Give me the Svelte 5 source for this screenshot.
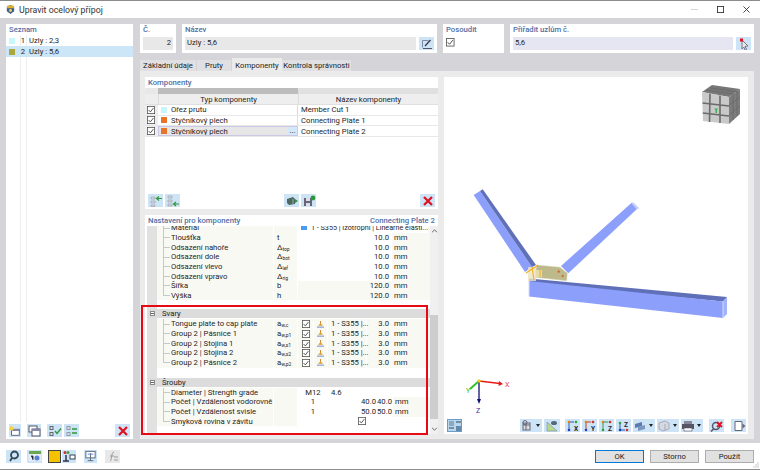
<script lang="ts">
	const plate = [
		{ n: 'Materiál', s: '', mat: true },
		{ n: 'Tloušťka', s: 't', v: '10.0', edit: true },
		{ n: 'Odsazení nahoře', s: 'Δ', sub: 'top', v: '10.0', edit: true },
		{ n: 'Odsazení dole', s: 'Δ', sub: 'bot', v: '10.0', edit: true },
		{ n: 'Odsazení vlevo', s: 'Δ', sub: 'lef', v: '10.0', edit: true },
		{ n: 'Odsazení vpravo', s: 'Δ', sub: 'rig', v: '10.0', edit: true },
		{ n: 'Šířka', s: 'b', v: '120.0' },
		{ n: 'Výška', s: 'h', v: '120.0' }
	];
	const welds = [
		{ n: 'Tongue plate to cap plate', sub: 'w,c' },
		{ n: 'Group 2 | Pásnice 1', sub: 'w,p1' },
		{ n: 'Group 2 | Stojina 1', sub: 'w,s1' },
		{ n: 'Group 2 | Stojina 2', sub: 'w,s2' },
		{ n: 'Group 2 | Pásnice 2', sub: 'w,p2' }
	];
	const components = [
		{ type: 'Ořez prutu', color: '#c8f4fb', name: 'Member Cut 1' },
		{ type: 'Styčníkový plech', color: '#e8742c', name: 'Connecting Plate 1' },
		{ type: 'Styčníkový plech', color: '#e8742c', name: 'Connecting Plate 2', active: true }
	];
	const tabs = ['Základní údaje', 'Pruty', 'Komponenty', 'Kontrola správnosti'];
	const axisText = (l) => `<text x="8" y="11" font-size="6.5" font-weight="700" fill="#223">${l}</text>`;
</script>

{#snippet check()}
	<svg class="check" viewBox="0 0 10 10">
		<rect x="0.5" y="0.5" width="9" height="9" fill="#fff" stroke="#555" />
		<path d="M2 5l2.2 2.4L8 2.6" fill="none" stroke="#444" stroke-width="1.1" />
	</svg>
{/snippet}

{#snippet weldIcon()}
	<svg class="weld" viewBox="0 0 8 8">
		<path d="M4 0v5" stroke="#c77a1c" />
		<path d="M1 5.5L4 2.5L7 5.5z" fill="#e0a030" />
		<path d="M0 7h8" stroke="#5b7fc7" />
	</svg>
{/snippet}

{#snippet tool(width, paths, extra = '')}
	<span class="tool {extra}" style="width:{width}px">
		<svg viewBox="0 0 14 12" width="14" height="12">{@html paths}</svg>
	</span>
{/snippet}

<div class="window">
	<header class="titlebar">
		<svg class="appicon" viewBox="0 0 12 12">
			<path d="M6 1l4 2v5l-4 3-4-3V3z" fill="#3d5f8f" />
			<path d="M3 1.5h6l1 3H2z" fill="#e0b030" />
			<circle cx="6" cy="7" r="1.6" fill="#f2d060" />
		</svg>
		<span class="title">Upravit ocelový přípoj</span>
		<span class="winbtns">
			<svg viewBox="0 0 8 8" class="min"><path d="M0 4h8" stroke="#d0d0d0" /></svg>
			<svg viewBox="0 0 8 8"><rect x="0.5" y="0.5" width="7" height="7" fill="none" stroke="#333" /></svg>
			<svg viewBox="0 0 8 8"><path d="M0.5 0.5l7 7M7.5 0.5l-7 7" stroke="#333" /></svg>
		</span>
	</header>

	<div class="body">
		<aside class="list">
			<div class="caption">Seznam</div>
			<div class="listrows">
				<div class="listrow"><i style="background:#c8f8fb"></i><b>1</b><span>Uzly : 2,3</span></div>
				<div class="listrow selected"><i style="background:#a8a83c"></i><b>2</b><span>Uzly : 5,6</span></div>
			</div>
			<div class="bar">
				{@render tool(12, '<rect x="3" y="4" width="9" height="7" fill="#fff" stroke="#556"/><path d="M3 4h9v2H3z" fill="#88a"/><circle cx="3" cy="3" r="2.4" fill="#f5d340"/>')}
				<span class="s6"></span>
				{@render tool(14, '<rect x="2" y="1" width="8" height="6" fill="#fff" stroke="#556"/><rect x="5" y="4" width="8" height="7" fill="#fff" stroke="#556"/><path d="M5 4h8v2H5z" fill="#88a"/>')}
				<span class="s6"></span>
				{@render tool(15, '<rect x="2" y="1.5" width="3" height="3" fill="none" stroke="#666"/><rect x="2" y="7.5" width="3" height="3" fill="none" stroke="#666"/><path d="M7 6l2 2.5 4-5" fill="none" stroke="#2a9a3a" stroke-width="1.4"/>')}
				<span class="s2"></span>
				{@render tool(15, '<rect x="2" y="1.5" width="3" height="3" fill="none" stroke="#999"/><rect x="2" y="7.5" width="3" height="3" fill="none" stroke="#999"/><path d="M7 4h5M12 8H7" stroke="#2a9a3a" stroke-width="1.4"/>')}
				<span class="grow"></span>
				{@render tool(15, '<path d="M3 2l8 8M11 2l-8 8" stroke="#e01020" stroke-width="2.2"/>')}
			</div>
		</aside>

		<main class="main">
			<div class="top">
				<section class="card no">
					<div class="caption">Č.</div>
					<div class="field right">2</div>
				</section>
				<section class="card name">
					<div class="caption">Název</div>
					<div class="fieldrow">
						<div class="field">Uzly : 5,6</div>
						{@render tool(15, '<path d="M2.500 2.500h6M2.500 2.500v7" stroke="#7a8aa0" fill="none"/><path d="M5 8L10.500 2" stroke="#334" stroke-width="1.200"/><path d="M3 10.500h9" stroke="#556"/>')}
					</div>
				</section>
				<section class="card verify">
					<div class="caption">Posoudit</div>
					{@render check()}
				</section>
				<section class="card assign">
					<div class="caption">Přiřadit uzlům č.</div>
					<div class="fieldrow">
						<div class="field lilac">5,6</div>
						{@render tool(15, '<path d="M5 2l6 6-3 .4 1.6 3-1.4.6-1.5-3L5 11z" fill="#e8e8e8" stroke="#778"/><rect x="3" y="0.500" width="3" height="3" fill="#e01020"/>')}
					</div>
				</section>
			</div>

			<nav class="tabs">
				{#each tabs as t, i}
					<span class="tab" class:active={i === 2}>{t}</span>
				{/each}
			</nav>

			<div class="tabpanel">
				<div class="leftcol">
					<section class="comps">
						<div class="caption">Komponenty</div>
						<div class="band"><span></span><span></span><span></span></div>
						<div class="thead"><span></span><span>Typ komponenty</span><span>Název komponenty</span></div>
						{#each components as c}
							<div class="trow">
								<span class="tick">{@render check()}</span>
								<span class="ttype" class:active={c.active}>
									<i style="background:{c.color}"></i>{c.type}
									{#if c.active}<em>...</em>{/if}
								</span>
								<span class="tname">{c.name}</span>
							</div>
						{/each}
						<div class="grow"></div>
						<div class="bar">
							{@render tool(15, '<path d="M2 2h4v2H2zM2 6h4v2H2zM2 10h4v1.5H2z" fill="#ddd" stroke="#889" stroke-width=".5"/><path d="M13 3.5H8M10 1.5l-2.5 2 2.5 2" fill="none" stroke="#2a9a3a" stroke-width="1.2"/>')}
							<span class="s2"></span>
							{@render tool(15, '<path d="M2 1h4v2H2zM2 5h4v2H2zM2 9h4v2H2z" fill="#ddd" stroke="#889" stroke-width=".5"/><path d="M13 9H8M10 7l-2.5 2 2.5 2" fill="none" stroke="#2a9a3a" stroke-width="1.2"/>')}
							<span class="grow"></span>
							{@render tool(15, '<path d="M2 4l6-2 2 2v5l-6 1-2-2z" fill="#4a6a60"/><path d="M8 4v5" stroke="#9ab"/><path d="M10 4l3 2-3 2z" fill="#2a9a3a"/>')}
							<span class="s2"></span>
							{@render tool(15, '<rect x="2" y="3" width="8" height="8" fill="#667"/><rect x="4" y="3" width="4" height="3" fill="#dde"/><rect x="4" y="8" width="4" height="3" fill="#dde"/><circle cx="11" cy="3" r="2.4" fill="#2a9a3a"/>')}
							<span class="s104"></span>
							{@render tool(15, '<path d="M3 2l8 8M11 2l-8 8" stroke="#e01020" stroke-width="2.2"/>')}
						</div>
					</section>

					<section class="settings">
						<div class="capline">
							<span class="caption">Nastavení pro komponenty</span>
							<span class="caption">Connecting Plate 2</span>
						</div>
						<div class="treewrap">
							<div class="tree">
								<div class="group first">
									{#each plate as r, i}
										<div class="row" class:last={i === plate.length - 1}>
											<span class="nm">{r.n}</span>
											<span class="sy">{r.s}{#if r.sub}<sub>{r.sub}</sub>{/if}</span>
											{#if r.mat}
												<span class="val mat"><i></i>1 - S355 | Izotropní | Lineárně elasti...</span>
											{:else}
												<span class="val num" class:edit={r.edit}>{r.v}</span>
												<span class="unit">mm</span>
											{/if}
										</div>
									{/each}
								</div>

								<div class="head"><span class="exp"></span>Svary</div>
								<div class="group">
									{#each welds as w, i}
										<div class="row" class:last={i === welds.length - 1}>
											<span class="nm">{w.n}</span>
											<span class="sy">a<sub>{w.sub}</sub></span>
											<span class="cchk">{@render check()}</span>
											<span class="cicon">{@render weldIcon()}</span>
											<span class="cmat">1 - S355 |...</span>
											<span class="cnum">3.0</span>
											<span class="unit">mm</span>
										</div>
									{/each}
								</div>

								<div class="head second"><span class="exp"></span>Šrouby</div>
								<div class="group">
									<div class="row">
										<span class="nm">Diameter | Strength grade</span>
										<span class="sy"></span>
										<span class="count">M12</span>
										<span class="grade">4.6</span>
									</div>
									<div class="row">
										<span class="nm">Počet | Vzdálenost vodorovně</span>
										<span class="sy"></span>
										<span class="count">1</span>
										<span class="dist">40.0</span>
										<span class="dist2">40.0</span>
										<span class="unit">mm</span>
									</div>
									<div class="row">
										<span class="nm">Počet | Vzdálenost svisle</span>
										<span class="sy"></span>
										<span class="count">1</span>
										<span class="dist">50.0</span>
										<span class="dist2">50.0</span>
										<span class="unit">mm</span>
									</div>
									<div class="row last">
										<span class="nm">Smyková rovina v závitu</span>
										<span class="sy"></span>
										<span class="shear">{@render check()}</span>
									</div>
								</div>
							</div>
							<div class="scroll">
								<svg viewBox="0 0 8 5" class="arrow"><path d="M1 4l3-3 3 3" fill="none" stroke="#444" /></svg>
								<div class="thumb"></div>
								<svg viewBox="0 0 8 5" class="arrow"><path d="M1 1l3 3 3-3" fill="none" stroke="#444" /></svg>
							</div>
						</div>
						<div class="redframe"></div>
					</section>
				</div>

				<section class="view">
					<svg class="scene" viewBox="444 77 304 357">
						<!-- diagonals -->
						<path d="M473.7 195L480 191 532 267 525 272z" fill="#8c9ffb" />
						<path d="M480 191L482.7 189.300 536 265 532 267z" fill="#5f70b8" />
						<path d="M631.700 202.700L637 209 568.300 273.300 561 266z" fill="#8c9ffb" />
						<path d="M633 202L639.300 208.300 637 209.500 631.700 203.500z" fill="#c6cffc" />
						<!-- chord -->
						<path d="M529 278.500L727 297 723 301.500 529 283z" fill="#5f70b8" />
						<path d="M529 281L723 301.500 723 318 529 296.500z" fill="#8c9ffb" />
						<path d="M723 301.500L727 297 727 314 723 318z" fill="#a3b2fc" />
						<path d="M723 301.500V318" stroke="#d6dcfd" />
						<path d="M529 280V296" stroke="#d6dcfd" />
						<!-- plate and weld -->
						<path d="M536.700 265L560 267.300 567.300 273.300 566.700 280.700 535 277.300z" fill="#bdb98a" stroke="#d8d6b8" stroke-width=".5" />
						<rect x="528" y="267" width="8" height="14" fill="#efe3c0" opacity=".8" />
						<rect x="535" y="270" width="7" height="7" fill="#f0e4b0" opacity=".8" />
						<path d="M526 273L538 265M532 267L534 280M540 270V277" stroke="#f0b020" stroke-width="1.1" fill="none" />
						<circle cx="558.700" cy="271.700" r="1.1" fill="#c8602c" />
						<circle cx="562.700" cy="276" r="1.1" fill="#c8602c" />
						<!-- orientation cube -->
						<path d="M702 92L712 85 740 89 729 97z" fill="#777" />
						<path d="M729 97L740 89 740 114 729 124z" fill="#7d7d7d" />
						<path d="M702 92L729 97 729 124 703 121z" fill="#c9c9c9" />
						<path d="M710 93.500L709.500 122M720 95.500V123M702.500 103L729 106M702.800 113L729 116" stroke="#6a6a6a" stroke-width="1.6" />
						<path d="M733 93V120M737 91V116M729 105L740 97M729 115L740 106M711 88L738 92M706 90L733 94" stroke="#686868" stroke-width=".8" />
						<path d="M714 108.500h4l-1 1.500v3h-1.500v-3z" fill="#40b050" />
						<!-- axes -->
						<path d="M479 381L500 383.500" stroke="#e81818" stroke-width="1.3" />
						<path d="M499 381L503 384 498.500 386z" fill="#e81818" />
						<path d="M479 381L470 389" stroke="#30c030" stroke-width="2" />
						<path d="M479 381V400" stroke="#101070" stroke-width="1.3" />
						<path d="M477 399H481L479 404z" fill="#101070" />
						<circle cx="479" cy="381" r="1.700" fill="#e8d020" />
						<text x="505" y="387" class="ax" fill="#e84040">X</text>
						<text x="466" y="393" class="ax" fill="#30c030">Y</text>
						<text x="476" y="413" class="ax" fill="#3030a0">Z</text>
					</svg>
					<div class="viewbar">
						<span class="tool pressed" style="width:15px">
							<svg viewBox="0 0 14 12" width="14" height="12"><path d="M1 1h5v5H1z" fill="#8ab"/><path d="M8 6h5v5H8z" fill="#68a"/><path d="M1 8h5M8 2h5" stroke="#345"/></svg>
						</span>
						<span class="grow"></span>
						<span class="tool dd" style="width:22px"><svg viewBox="0 0 14 12" width="14" height="12"><rect x="3" y="3" width="7" height="7" fill="#ddd" stroke="#667"/><path d="M3 5h7M6 3v7" stroke="#667"/><circle cx="5" cy="2.500" r="2" fill="none" stroke="#667"/></svg><u></u></span>
						<span class="s2"></span>
						{@render tool(16, '<path d="M2 11V2l10 9z" fill="#b8d890" stroke="#789" stroke-width=".6"/><ellipse cx="9" cy="3" rx="3" ry="2" fill="#567"/>')}
						<span class="s5"></span>
						{@render tool(15, `<path d="M2 2h6M3 2v8" stroke="#2a60b0"/><circle cx="3" cy="2" r="1.300" fill="#e08020"/><circle cx="10" cy="2" r="1.300" fill="#30a040"/><circle cx="3" cy="10" r="1.300" fill="#2040c0"/>${axisText('X')}`)}
						<span class="s2"></span>
						{@render tool(15, `<path d="M2 2h6M3 2v8" stroke="#c04030"/><circle cx="3" cy="2" r="1.300" fill="#e08020"/><circle cx="10" cy="2" r="1.300" fill="#d03030"/><circle cx="3" cy="10" r="1.300" fill="#2040c0"/>${axisText('Y')}`)}
						<span class="s2"></span>
						{@render tool(15, `<path d="M2 2h6M3 2v8" stroke="#30a040"/><circle cx="3" cy="2" r="1.300" fill="#e08020"/><circle cx="10" cy="2" r="1.300" fill="#d03030"/><circle cx="3" cy="10" r="1.300" fill="#30a040"/>${axisText('Z')}`)}
						<span class="s2"></span>
						{@render tool(15, `<path d="M3 3v7h5" stroke="#2a60b0" fill="none"/><circle cx="3" cy="3" r="1.300" fill="#30a040"/><circle cx="3" cy="10" r="1.300" fill="#2040c0"/><circle cx="10" cy="10" r="1.300" fill="#d03030"/><text x="7" y="7" font-size="6.500" font-weight="700" fill="#223">Z</text>`)}
						<span class="s2"></span>
						<span class="tool dd" style="width:22px"><svg viewBox="0 0 14 12" width="14" height="12"><path d="M2 4l7-2v4l-7 2z" fill="#5a7ab0"/><path d="M5 7l7-2v4l-7 2z" fill="#7d96c0"/></svg><u></u></span>
						<span class="s2"></span>
						<span class="tool dd" style="width:22px"><svg viewBox="0 0 14 12" width="14" height="12"><path d="M2 3l6-2 4 2v6l-6 2-4-2z" fill="#d4d8e0" stroke="#aab"/><path d="M8 4v6" stroke="#aab"/></svg><u></u></span>
						<span class="s2"></span>
						<span class="tool dd" style="width:22px"><svg viewBox="0 0 14 12" width="14" height="12"><rect x="1" y="4" width="12" height="5" fill="#556"/><rect x="3" y="1" width="8" height="3" fill="#889"/><rect x="3" y="8" width="8" height="3" fill="#fff" stroke="#556" stroke-width=".6"/></svg><u></u></span>
						<span class="s6"></span>
						{@render tool(15, '<circle cx="6" cy="6" r="3.500" fill="none" stroke="#556" stroke-width="1.500"/><path d="M3.500 9L1 11.500" stroke="#556" stroke-width="1.500"/><path d="M7 2l5 5M12 2L7 7" stroke="#e01020" stroke-width="1.800"/>')}
						<span class="s7"></span>
						{@render tool(15, '<path d="M3 1.500h7v9H3z" fill="#fff" stroke="#667"/><path d="M10.500 3.500l3 2.500-3 2.500z" fill="#667"/>')}
					</div>
				</section>
			</div>
		</main>
	</div>

	<footer class="footer">
		{@render tool(15, '<circle cx="7.500" cy="5" r="3.500" fill="none" stroke="#345" stroke-width="1.800"/><path d="M5 8L3 11" stroke="#345" stroke-width="1.800"/>')}
		<span class="s6"></span>
		{@render tool(15, '<rect x="1" y="1" width="12" height="3" fill="#6aa84f"/><rect x="1" y="4" width="12" height="7" fill="#e8eef8"/><circle cx="9" cy="8" r="2.500" fill="#5a80d0"/><path d="M3 6h2v4" stroke="#345"/>')}
		<span class="s6"></span>
		<span class="swatch"></span>
		<span class="s1"></span>
		{@render tool(14, '<circle cx="3" cy="2.500" r="1.500" fill="#d03030"/><circle cx="6" cy="2.500" r="1.500" fill="#40a040"/><path d="M4 5v6M1 11h6" stroke="#334" stroke-width="1.500"/><rect x="8" y="5" width="5" height="4" fill="#fff" stroke="#345"/>')}
		<span class="s8"></span>
		{@render tool(13, '<rect x="2" y="1" width="10" height="7" fill="#fff" stroke="#567"/><path d="M7 3v8M4 11h6" stroke="#567"/><path d="M4 4h6" stroke="#5a80d0"/>')}
		<span class="s8"></span>
		<span class="tool greyed" style="width:15px"><svg viewBox="0 0 14 12" width="14" height="12"><path d="M4 11c2 0 1-9 4-9M4 6h4M8 7h4M8 10h4" fill="none" stroke="#999"/></svg></span>
		<span class="grow"></span>
		<button class="btn primary">OK</button>
		<button class="btn">Storno</button>
		<button class="btn">Použít</button>
		<svg class="grip" viewBox="0 0 6 6"><path d="M5 1v0M3 3v0M5 3v0M1 5v0M3 5v0M5 5v0" stroke="#999" stroke-linecap="square" /></svg>
	</footer>
</div>

<style>
	:global(body) {
		margin: 0;
		background: #fff;
	}
	.window {
		width: 760px;
		height: 470px;
		box-sizing: border-box;
		display: flex;
		flex-direction: column;
		border-top: 1px solid #8c8c8c;
		border-bottom: 1px solid #8c8c8c;
		font-family: Roboto, "Noto Sans", sans-serif;
		font-size: 7.700px;
		color: #1e1e1e;
		overflow: hidden;
	}
	i, em, u, sub {
		font-style: normal;
		text-decoration: none;
	}

	.titlebar {
		height: 17px;
		flex: none;
		display: flex;
		align-items: center;
		padding-left: 5px;
		background: #fff;
	}
	.appicon {
		width: 11px;
		height: 11px;
		margin-right: 3px;
	}
	.title {
		font-size: 8.800px;
		color: #333;
	}
	.winbtns {
		margin-left: auto;
		display: flex;
		gap: 19px;
		padding-right: 10px;
	}
	.winbtns svg {
		width: 7px;
		height: 7px;
	}

	.body {
		flex: 1;
		min-height: 0;
		display: flex;
		gap: 7px;
		padding: 6px 6px 4px;
		background: #d5d5d9;
	}
	.caption {
		color: #4f6fa3;
		font-weight: 500;
		font-size: 7.700px;
		line-height: 11px;
	}

	.list {
		width: 127px;
		flex: none;
		display: flex;
		flex-direction: column;
		background: #fff;
		box-sizing: border-box;
		padding-bottom: 2px;
	}
	.list .caption {
		padding: 0 3px;
	}
	.listrows {
		flex: 1;
		margin: 0 0 2px;
		background:
			linear-gradient(#eee, #eee) 14px 0 / 1px 100% no-repeat,
			linear-gradient(#eee, #eee) 20px 0 / 1px 100% no-repeat;
	}
	.listrow {
		height: 11px;
		display: flex;
		align-items: center;
	}
	.listrow i {
		width: 6px;
		height: 6px;
		margin-left: 3px;
	}
	.listrow b {
		width: 10px;
		text-align: right;
		font-weight: 400;
		margin: 0 4px 0 0;
	}
	.listrow.selected {
		background: #cde6f7;
	}
	.bar {
		display: flex;
		align-items: center;
		padding: 0 3px;
		height: 13px;
	}
	.tool {
		height: 13px;
		flex: none;
		display: inline-flex;
		align-items: center;
		justify-content: center;
		background: #cde4f7;
	}
	.tool.pressed {
		background: #b8d6ee;
		outline: 1px solid #6a9cc8;
		outline-offset: -1px;
	}
	.tool.greyed {
		background: #e8e8e8;
	}
	.tool.dd {
		justify-content: flex-start;
	}
	.tool.dd u {
		width: 0;
		height: 0;
		margin-left: 2px;
		border: 2px solid transparent;
		border-top: 3px solid #222;
		border-bottom: 0;
	}
	.grow {
		flex: 1;
	}
	.s1 { width: 1px; flex: none; }
	.s2 { width: 2px; flex: none; }
	.s5 { width: 5px; flex: none; }
	.s6 { width: 6px; flex: none; }
	.s7 { width: 7px; flex: none; }
	.s8 { width: 8px; flex: none; }
	.s104 { width: 104px; flex: none; }

	.main {
		flex: 1;
		min-width: 0;
		display: flex;
		flex-direction: column;
	}
	.top {
		height: 29px;
		flex: none;
		display: flex;
		gap: 6px;
	}
	.card {
		background: #fff;
		box-sizing: border-box;
		padding: 0 3px;
	}
	.card.no { width: 36px; }
	.card.name { width: 255px; }
	.card.verify { width: 61px; }
	.card.assign { flex: 1; }
	.field {
		height: 12.500px;
		line-height: 12.500px;
		background: #e8e8e8;
		padding: 0 2px;
		flex: 1;
		margin-top: 2px;
	}
	.field.right {
		text-align: right;
	}
	.field.lilac {
		background: #e6e6f2;
	}
	.fieldrow {
		display: flex;
		gap: 3px;
	}
	.fieldrow .tool {
		margin-top: 2px;
	}
	.check {
		width: 8.500px;
		height: 8.500px;
		display: block;
	}
	.verify .check {
		margin-top: 3px;
	}

	.tabs {
		height: 13px;
		margin-top: 5px;
		flex: none;
		display: flex;
		align-items: flex-end;
	}
	.tab {
		height: 11px;
		box-sizing: border-box;
		background: #e0e0e3;
		line-height: 11px;
		text-align: center;
		border-right: 1px solid #d5d5d9;
		white-space: nowrap;
	}
	.tab:nth-child(1) { width: 57px; }
	.tab:nth-child(2) { width: 35px; }
	.tab:nth-child(3) { width: 50px; }
	.tab:nth-child(4) { width: 70px; }
	.tab.active {
		height: 13px;
		line-height: 15px;
		background: #ebebeb;
		border-right: 0;
	}

	.tabpanel {
		flex: 1;
		min-height: 0;
		display: flex;
		gap: 6px;
		padding: 6px 6px 5px 5px;
		background: #ebebeb;
	}
	.leftcol {
		width: 293px;
		flex: none;
		display: flex;
		flex-direction: column;
		gap: 6px;
	}
	.comps {
		height: 132px;
		flex: none;
		display: flex;
		flex-direction: column;
		background: #fff;
		box-sizing: border-box;
		padding-bottom: 2px;
	}
	.comps > .caption {
		padding: 0 3px;
	}
	.band, .thead, .trow {
		display: grid;
		grid-template-columns: 13px 140px 1fr;
	}
	.band {
		height: 6px;
	}
	.band span:nth-child(1) { background: #e8e8e8; }
	.band span:nth-child(2) { background: #bcbcbc; }
	.band span:nth-child(3) { background: #e0e0e0; }
	.thead {
		height: 11px;
		line-height: 11px;
		text-align: center;
		background: #eeeeee;
		border-bottom: 1px solid #e0e0e0;
		box-sizing: border-box;
	}
	.thead span + span {
		border-left: 1px solid #dcdcdc;
	}
	.trow {
		height: 9.650px;
		line-height: 9px;
		border-bottom: 1px solid #e8e8e8;
	}
	.tick {
		display: flex;
		align-items: center;
		padding-left: 2px;
		background: #eee;
	}
	.tick .check {
		width: 8px;
		height: 8px;
	}
	.ttype {
		display: flex;
		align-items: center;
		padding-left: 3px;
		border-right: 1px solid #ddd;
	}
	.ttype i {
		width: 6px;
		height: 6px;
		margin-right: 4px;
	}
	.ttype.active {
		background: #e6e6e6;
		outline: 1px solid #c9c9e6;
		outline-offset: -1px;
	}
	.ttype em {
		margin-left: auto;
		width: 9px;
		background: #d5e8f8;
		text-align: center;
		align-self: stretch;
	}
	.tname {
		padding-left: 3px;
		display: flex;
		align-items: center;
	}

	.settings {
		flex: 1;
		min-height: 0;
		display: flex;
		flex-direction: column;
		position: relative;
		background: #fff;
	}
	.capline {
		height: 11px;
		flex: none;
		display: flex;
		justify-content: space-between;
		padding: 0 3px;
		background: #fff;
		position: relative;
		z-index: 1;
	}
	.treewrap {
		flex: 1;
		min-height: 0;
		display: flex;
		overflow: hidden;
	}
	.tree {
		width: 283px;
		flex: none;
		margin-left: 2px;
		margin-top: -2.700px;
		background: linear-gradient(#e1e1e1, #e1e1e1) 0 0 / 10px 100% no-repeat;
	}
	.group {
		padding-left: 10px;
	}
	.group.first {
		margin-bottom: 8.500px;
	}
	.row {
		height: 9.650px;
		line-height: 9.650px;
		display: flex;
		background: #f9f9f4;
		position: relative;
		white-space: nowrap;
	}
	.nm {
		width: 117px;
		flex: none;
		box-sizing: border-box;
		padding-left: 14px;
		position: relative;
		border-right: 1px solid #fff;
	}
	.nm::before {
		content: "";
		position: absolute;
		left: 6px;
		top: 0;
		bottom: 0;
		width: 7px;
		background:
			linear-gradient(#c8c8c8, #c8c8c8) 0 0 / 1px 100% no-repeat,
			linear-gradient(#c8c8c8, #c8c8c8) 0 50% / 100% 1px no-repeat;
	}
	.row.last .nm::before {
		background:
			linear-gradient(#c8c8c8, #c8c8c8) 0 0 / 1px 50% no-repeat,
			linear-gradient(#c8c8c8, #c8c8c8) 0 50% / 100% 1px no-repeat;
	}
	.sy {
		width: 24px;
		flex: none;
		box-sizing: border-box;
		padding-left: 3px;
		border-right: 1px solid #fff;
	}
	sub {
		font-size: 5px;
		vertical-align: baseline;
		position: relative;
		top: 1px;
	}
	.val {
		width: 94px;
		flex: none;
		box-sizing: border-box;
		padding-right: 3px;
	}
	.val.num {
		text-align: right;
	}
	.val.edit {
		background: #fff;
	}
	.val.mat {
		width: 130px;
		background: #fff;
		padding-left: 3px;
		font-size: 7.200px;
		overflow: hidden;
		display: flex;
		align-items: center;
	}
	.val.mat i {
		width: 6px;
		height: 4px;
		flex: none;
		background: #4a9cf0;
		margin-right: 4px;
	}
	.unit {
		padding-left: 2px;
	}
	.cchk {
		width: 16px;
		flex: none;
		display: flex;
		align-items: center;
		padding-left: 4px;
		box-sizing: border-box;
		border-right: 1px solid #fff;
	}
	.cchk .check {
		width: 8px;
		height: 8px;
	}
	.cicon {
		width: 14px;
		flex: none;
		display: flex;
		align-items: center;
		justify-content: center;
		box-sizing: border-box;
		border-right: 1px solid #fff;
	}
	.weld {
		width: 7px;
		height: 7px;
	}
	.cmat {
		width: 39px;
		flex: none;
		padding-left: 3px;
		box-sizing: border-box;
		border-right: 1px solid #fff;
	}
	.cnum {
		width: 25px;
		flex: none;
		text-align: right;
		padding-right: 3px;
		box-sizing: border-box;
	}
	.head {
		height: 9.500px;
		line-height: 9.500px;
		margin-left: 1px;
		padding-left: 14px;
		background: #dcdcdc;
		position: relative;
		margin-bottom: 1px;
	}
	.head.second {
		margin-top: 10px;
		margin-bottom: 0.500px;
	}
	.exp {
		position: absolute;
		left: 2px;
		top: 2px;
		width: 5px;
		height: 5px;
		box-sizing: border-box;
		border: 1px solid #888;
		background: linear-gradient(#666, #666) center / 3px 1px no-repeat #fff;
	}
	.count {
		width: 30px;
		flex: none;
		text-align: center;
		background: #fff;
	}
	.grade {
		padding-left: 3px;
		flex: 1;
		background: #fff;
	}
	.dist {
		width: 48px;
		flex: none;
		text-align: right;
		background: #fff;
	}
	.dist2 {
		width: 16px;
		flex: none;
		text-align: right;
		background: #fff;
		padding-right: 1px;
	}
	.shear {
		flex: 1;
		padding-left: 60px;
		display: flex;
		align-items: center;
		background: #fff;
	}
	.shear .check {
		width: 8px;
		height: 8px;
	}
	.scroll {
		flex: 1;
		display: flex;
		flex-direction: column;
		align-items: center;
		background: #f0f0f0;
		padding: 3px 0;
	}
	.arrow {
		width: 7px;
		height: 4px;
		flex: none;
	}
	.thumb {
		width: 8px;
		height: 104px;
		margin: 82px 0 auto;
		background: #cdcdcd;
	}
	.redframe {
		position: absolute;
		left: -4px;
		top: 90px;
		width: 287px;
		height: 130px;
		box-sizing: border-box;
		border: 2.500px solid #e60a14;
		pointer-events: none;
		z-index: 2;
	}

	.view {
		flex: 1;
		min-width: 0;
		position: relative;
		background: #fff;
	}
	.scene {
		position: absolute;
		inset: 0;
		width: 100%;
		height: 100%;
	}
	.ax {
		font-size: 7px;
	}
	.viewbar {
		position: absolute;
		left: 3px;
		right: 2px;
		bottom: 2px;
		display: flex;
		align-items: center;
	}

	.footer {
		height: 26px;
		flex: none;
		display: flex;
		align-items: center;
		padding: 0 6px;
		background: #fff;
		position: relative;
	}
	.swatch {
		width: 13px;
		height: 13px;
		box-sizing: border-box;
		background: #f5c200;
		border: 1px solid #444;
	}
	.btn {
		width: 49px;
		height: 13px;
		margin-left: 6px;
		padding: 0;
		font: inherit;
		line-height: 11px;
		color: #222;
		background: #e1e1e1;
		border: 1px solid #adadad;
	}
	.btn.primary {
		border-color: #0078d7;
		margin-left: 0;
	}
	.grip {
		position: absolute;
		right: 1px;
		bottom: 1px;
		width: 6px;
		height: 6px;
	}
</style>
